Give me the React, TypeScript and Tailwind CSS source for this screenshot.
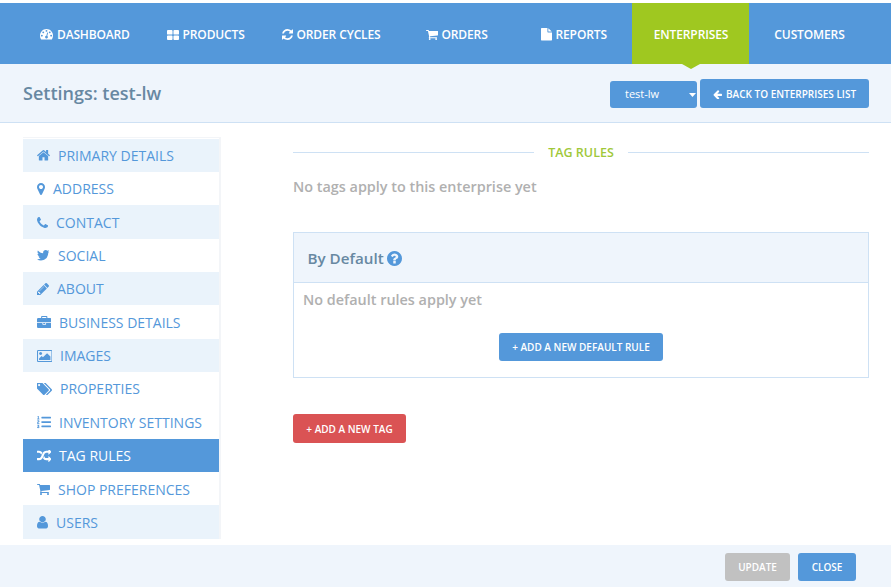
import React from "react";
import { FaListOl } from "react-icons/fa";

type IconProps = { box: string; w: number; h: number; d: string };

function Icon({ box, w, h, d }: IconProps) {
  return (
    <svg viewBox={box} width={w} height={h} fill="currentColor" preserveAspectRatio="none" className="shrink-0" aria-hidden="true">
      <path d={d} />
    </svg>
  );
}

const paths = {
  home: "M1472 992v480q0 26-19 45t-45 19h-384v-384h-256v384h-384q-26 0-45-19t-19-45v-480q0-1 .5-3t.5-3l575-474 575 474q1 2 1 6zm223-69l-62 74q-8 9-21 11h-3q-13 0-21-7l-692-577-692 577q-12 8-24 7-13-2-21-11l-62-74q-8-10-7-23.5t11-21.5l719-599q32-26 76-26t76 26l244 204v-195q0-14 9-23t23-9h192q14 0 23 9t9 23v408l219 182q10 8 11 21.5t-7 23.5z",
  marker: "M1152 640q0-106-75-181t-181-75-181 75-75 181 75 181 181 75 181-75 75-181zm256 0q0 109-33 179l-364 774q-16 33-47.5 52t-67.5 19-67.5-19-46.5-52l-365-774q-33-70-33-179 0-212 150-362t362-150 362 150 150 362z",
  phone: "M1600 1240q0 27-10 70.5t-21 68.5q-21 50-122 106-94 51-186 51-27 0-52.5-3.5t-57.5-12.5-47.5-14.5-55.5-20.5-49-18q-98-35-175-83-128-79-264.5-215.5t-215.5-264.5q-48-77-83-175-3-9-18-49t-20.5-55.5-14.5-47.5-12.5-57.5-3.5-52.5q0-92 51-186 56-101 106-122 25-11 68.5-21t70.5-10q14 0 21 3 18 6 53 76 11 19 30 54t35 63.5 31 53.5q3 4 17.5 25t21.5 35.5 7 28.5q0 20-28.5 50t-62 55-62 53-28.5 46q0 9 5 22.5t8.5 20.5 14 24 11.5 19q76 137 174 235t235 174q2 1 19 11.5t24 14 20.5 8.5 22.5 5q18 0 46-28.5t53-62 55-62 50-28.5q14 0 28.5 7t35.5 21.5 25 17.5q25 15 53.5 31t63.5 35 54 30q70 35 76 53 3 7 3 21z",
  twitter: "M1684 408q-67 98-162 167 1 14 1 42 0 130-38 259.5t-115.5 248.5-184.5 210.5-258 146-323 54.5q-271 0-496-145 35 4 78 4 225 0 401-138-105-2-188-64.5t-114-159.5q33 5 61 5 43 0 85-11-112-23-185.5-111.5t-73.5-205.5v-4q68 38 146 41-66-44-105-115t-39-154q0-88 44-163 121 149 294.5 238.5t371.5 99.5q-8-38-8-74 0-134 94.5-228.5t228.5-94.5q140 0 236 102 109-21 205-78-37 115-142 178 93-10 186-50z",
  pencil: "M491 1536l91-91-235-235-91 91v107h128v128h107zm523-928q0-22-22-22-10 0-17 7l-542 542q-7 7-7 17 0 22 22 22 10 0 17-7l542-542q7-7 7-17zm-54-192l416 416-832 832h-416v-416zm683 96q0 53-37 90l-166 166-416-416 166-165q36-38 90-38 53 0 91 38l235 234q37 39 37 91z",
  briefcase: "M640 256h512v-128h-512v128zm1152 640v480q0 66-47 113t-113 47h-1472q-66 0-113-47t-47-113v-480h672v160q0 26 19 45t45 19h320q26 0 45-19t19-45v-160h672zm-768 0v128h-256v-128h256zm768-480v384h-1792v-384q0-66 47-113t113-47h352v-160q0-40 28-68t68-28h576q40 0 68 28t28 68v160h352q66 0 113 47t47 113z",
  picture: "M704 576q0 80-56 136t-136 56-136-56-56-136 56-136 136-56 136 56 56 136zm1024 384v448h-1408v-192l320-320 160 160 512-512zm96-704h-1600q-13 0-22.5 9.5t-9.5 22.5v1216q0 13 9.5 22.5t22.5 9.5h1600q13 0 22.5-9.5t9.5-22.5v-1216q0-13-9.5-22.5t-22.5-9.5zm160 32v1216q0 66-47 113t-113 47h-1600q-66 0-113-47t-47-113v-1216q0-66 47-113t113-47h1600q66 0 113 47t47 113z",
  tags: "M384 448q0-53-37.5-90.5t-90.5-37.5-90.5 37.5-37.5 90.5 37.5 90.5 90.5 37.5 90.5-37.5 37.5-90.5zm1067 576q0 53-37 90l-491 492q-39 37-91 37-53 0-90-37l-715-716q-38-37-64.5-101t-26.5-117v-416q0-52 38-90t90-38h416q53 0 117 26.5t102 64.5l715 714q37 39 37 91zm384 0q0 53-37 90l-491 492q-39 37-91 37-36 0-59-14t-53-45l470-470q37-37 37-90 0-52-37-91l-715-714q-38-38-102-64.5t-117-26.5h224q53 0 117 26.5t102 64.5l715 714q37 39 37 91z",
  random: "M666 481q-60 92-137 273-22-45-37-72.5t-40.5-63.5-51-56.5-63-35-81.5-14.5h-224q-14 0-23-9t-9-23v-192q0-14 9-23t23-9h224q250 0 410 225zm1126 799q0 14-9 23l-320 320q-9 9-23 9-13 0-22.5-9.5t-9.5-22.5v-192q-32 0-85 .5t-81 1-73-1-71-5-64-10.5-63-18.5-58-28.5-59-40-55-53.5-56-69.5q59-93 136-273 22 45 37 72.5t40.5 63.5 51 56.5 63 35 81.5 14.5h256v-192q0-14 9-23t23-9q12 0 24 10l319 319q9 9 9 23zm0-896q0 14-9 23l-320 320q-9 9-23 9-13 0-22.5-9.5t-9.5-22.5v-192h-256q-48 0-87 15t-69 45-51 61.5-45 77.5q-32 62-78 171-29 66-49.5 111t-54 105-64 100-74 83-90 68.5-106.5 42-128 16.5h-224q-14 0-23-9t-9-23v-192q0-14 9-23t23-9h224q48 0 87-15t69-45 51-61.5 45-77.5q32-62 78-171 29-66 49.5-111t54-105 64-100 74-83 90-68.5 106.5-42 128-16.5h256v-192q0-14 9-23t23-9q12 0 24 10l319 319q9 9 9 23z",
  cart: "M704 1536q0 52-38 90t-90 38-90-38-38-90 38-90 90-38 90 38 38 90zm896 0q0 52-38 90t-90 38-90-38-38-90 38-90 90-38 90 38 38 90zm128-1088v512q0 24-16.5 42.5t-40.5 21.5l-1044 122q13 60 13 70 0 16-24 64h920q26 0 45 19t19 45-19 45-45 19h-1024q-26 0-45-19t-19-45q0-11 8-31.5t16-36 21.5-40 15.5-29.5l-177-823h-204q-26 0-45-19t-19-45 19-45 45-19h256q16 0 28.5 6.5t19.5 15.5 13 24.5 8 26 5.5 29.5 4.5 26h1201q26 0 45 19t19 45z",
  user: "M1536 1399q0 109-62.5 187t-150.5 78h-854q-88 0-150.5-78t-62.5-187q0-85 8.5-160.5t31.5-152 58.5-131 94-89 134.5-34.5q131 128 313 128t313-128q76 0 134.5 34.5t94 89 58.5 131 31.5 152 8.5 160.5zm-256-887q0 159-112.5 271.5t-271.5 112.5-271.5-112.5-112.5-271.5 112.5-271.5 271.5-112.5 271.5 112.5 112.5 271.5z",
  dashboard: "M384 1152q0-53-37.5-90.5t-90.5-37.5-90.5 37.5-37.5 90.5 37.5 90.5 90.5 37.5 90.5-37.5 37.5-90.5zm192-448q0-53-37.5-90.5t-90.5-37.5-90.5 37.5-37.5 90.5 37.5 90.5 90.5 37.5 90.5-37.5 37.5-90.5zm428 481l101-382q6-26-7.5-48.5t-38.5-29.5-48 6.5-30 39.5l-101 382q-60 5-107 43.5t-63 98.5q-20 77 20 146t117 89 146-20 89-117q16-60-6-117t-72-91zm660-33q0-53-37.5-90.5t-90.5-37.5-90.5 37.5-37.5 90.5 37.5 90.5 90.5 37.5 90.5-37.5 37.5-90.5zm-640-640q0-53-37.5-90.5t-90.5-37.5-90.5 37.5-37.5 90.5 37.5 90.5 90.5 37.5 90.5-37.5 37.5-90.5zm448 192q0-53-37.5-90.5t-90.5-37.5-90.5 37.5-37.5 90.5 37.5 90.5 90.5 37.5 90.5-37.5 37.5-90.5zm320 448q0 261-141 483-19 29-54 29h-1402q-35 0-54-29-141-221-141-483 0-182 71-348t191-286 286-191 348-71 348 71 286 191 191 286 71 348z",
  grid: "M192 896h512q128 0 128 128v384q0 128-128 128h-512q-128 0-128-128v-384q0-128 128-128zm0-768h512q128 0 128 128v384q0 128-128 128h-512q-128 0-128-128v-384q0-128 128-128zm896 768h512q128 0 128 128v384q0 128-128 128h-512q-128 0-128-128v-384q0-128 128-128zm0-768h512q128 0 128 128v384q0 128-128 128h-512q-128 0-128-128v-384q0-128 128-128z",
  refresh: "M1639 1056q0 5-1 7-64 268-268 434.5t-478 166.5q-146 0-282.5-55t-243.5-157l-129 129q-19 19-45 19t-45-19-19-45v-448q0-26 19-45t45-19h448q26 0 45 19t19 45-19 45l-137 137q71 66 161 102t187 36q134 0 250-65t186-179q11-17 53-117 8-23 30-23h192q13 0 22.5 9.5t9.5 22.5zm25-800v448q0 26-19 45t-45 19h-448q-26 0-45-19t-19-45 19-45l138-138q-148-137-349-137-134 0-250 65t-186 179q-11 17-53 117-8 23-30 23h-199q-13 0-22.5-9.5t-9.5-22.5v-7q65-268 270-434.5t480-166.5q146 0 284 55.5t245 156.5l130-129q19-19 45-19t45 19 19 45z",
  file: "M1152 512v-472q22 14 36 28l408 408q14 14 28 36h-472zm-128 32q0 40 28 68t68 28h544v1056q0 40-28 68t-68 28h-1344q-40 0-68-28t-28-68v-1600q0-40 28-68t68-28h800v544z",
  arrowLeft: "M1664 896v128q0 53-32.5 90.5t-84.5 37.5h-704l293 294q38 36 38 90t-38 90l-75 76q-37 37-90 37-52 0-91-37l-651-652q-37-37-37-90 0-52 37-91l651-650q38-38 91-38 52 0 90 38l75 74q38 38 38 91t-38 91l-293 293h704q52 0 84.5 37.5t32.5 90.5z",
  question: "M1024 1376v-192q0-14-9-23t-23-9h-192q-14 0-23 9t-9 23v192q0 14 9 23t23 9h192q14 0 23-9t9-23zm256-672q0-88-55.5-163t-138.5-116-170-41q-243 0-371 213-15 24 8 42l132 100q7 6 19 6 16 0 25-12 53-68 86-92 34-24 86-24 48 0 85.5 26t37.5 59q0 38-20 61t-68 45q-63 28-115.5 86.5t-52.5 125.5v36q0 14 9 23t23 9h192q14 0 23-9t9-23q0-19 21.5-49.5t54.5-49.5q32-18 49-28.5t46-35 44.5-48 28-60.5 12.5-81zm384 192q0 209-103 385.5t-279.5 279.5-385.5 103-385.5-103-279.5-279.5-103-385.5 103-385.5 279.5-279.5 385.5-103 385.5 103 279.5 279.5 103 385.5z",
};

const navItems = [
  { label: "DASHBOARD", icon: <Icon box="0 256 1792 1408" w={13} h={10.5} d={paths.dashboard} />, cell: "ml-[40px] w-[126.5px] tracking-[-0.16px]" },
  { label: "PRODUCTS", icon: <Icon box="64 128 1664 1408" w={12} h={10} d={paths.grid} />, cell: "w-[115px]" },
  { label: "ORDER CYCLES", icon: <Icon box="128 128 1536 1536" w={11} h={11} d={paths.refresh} />, cell: "w-[144px]" },
  { label: "ORDERS", icon: <Icon box="64 256 1664 1408" w={12} h={10} d={paths.cart} />, cell: "w-[115px]" },
  { label: "REPORTS", icon: <Icon box="128 0 1536 1792" w={11} h={12.5} d={paths.file} />, cell: "w-[91.5px]" },
];

const menu = [
  { label: "PRIMARY DETAILS", icon: <Icon box="90 250 1612 1286" w={13} h={10.5} d={paths.home} />, bg: "bg-[#eaf3fb]", gap: "gap-[8.5px]" },
  { label: "ADDRESS", icon: <Icon box="384 128 1024 1536" w={8} h={12} d={paths.marker} />, bg: "bg-white", gap: "gap-[8.5px]" },
  { label: "CONTACT", icon: <Icon box="192 128 1408 1408" w={11} h={11} d={paths.phone} />, bg: "bg-[#eaf3fb]", gap: "gap-[8.5px]" },
  { label: "SOCIAL", icon: <Icon box="108 256 1576 1280" w={12.5} h={10.5} d={paths.twitter} />, bg: "bg-white", gap: "gap-[9px]" },
  { label: "ABOUT", icon: <Icon box="128 149 1515 1515" w={12} h={12} d={paths.pencil} />, bg: "bg-[#eaf3fb]", gap: "gap-[8.5px]" },
  { label: "BUSINESS DETAILS", icon: <Icon box="0 0 1792 1536" w={14.5} h={12} d={paths.briefcase} />, bg: "bg-white", gap: "gap-[8px]" },
  { label: "IMAGES", icon: <Icon box="64 128 1920 1536" w={15.5} h={12} d={paths.picture} />, bg: "bg-[#eaf3fb]", gap: "gap-[8px]" },
  { label: "PROPERTIES", icon: <Icon box="0 192 1835 1451" w={15} h={12} d={paths.tags} />, bg: "bg-white", gap: "gap-[8.5px]" },
  { label: "INVENTORY SETTINGS", icon: <FaListOl size={14} className="shrink-0" />, bg: "bg-white", gap: "gap-[8.5px]" },
  { label: "TAG RULES", icon: <Icon box="0 160 1792 1472" w={14.5} h={12} d={paths.random} />, bg: "bg-[#5498da] text-white", gap: "gap-[8px]" },
  { label: "SHOP PREFERENCES", icon: <Icon box="64 256 1664 1408" w={13} h={11} d={paths.cart} />, bg: "bg-white", gap: "gap-[8.5px]" },
  { label: "USERS", icon: <Icon box="256 128 1280 1536" w={11} h={12.5} d={paths.user} />, bg: "bg-[#eaf3fb]", gap: "gap-[8.5px]" },
];

export default function App() {
  return (
    <div className="flex h-[587px] w-[891px] flex-col overflow-hidden bg-white pt-[3px] font-['Open_Sans',sans-serif] text-[#5498da]">
      <nav className="flex h-[61px] shrink-0 items-stretch bg-[#5498da] text-[12px] font-semibold tracking-[-0.12px] text-white">
        {navItems.map((n) => (
          <a key={n.label} className={`flex shrink-0 items-center gap-[4px] whitespace-nowrap pt-[2px] ${n.cell}`}>
            {n.icon}
            <span>{n.label}</span>
          </a>
        ))}
        <a className="relative flex w-[117px] shrink-0 items-center justify-center bg-[#9fc820] pl-px pt-[2px]">
          ENTERPRISES
          <svg className="absolute left-[50px] top-[61px]" width="18" height="5" viewBox="0 0 18 5" aria-hidden="true">
            <path d="M0 0h18L9 5z" fill="#9fc820" />
          </svg>
        </a>
        <a className="flex w-[120px] shrink-0 items-center justify-center pl-px pt-[2px]">CUSTOMERS</a>
      </nav>

      <header className="flex h-[59px] shrink-0 items-center border-b border-[#cee1f4] bg-[#eff5fc] pl-[23px] pr-[22px]">
        <h1 className="flex-1 text-[18px] font-semibold text-[#6788a2]">Settings: test-lw</h1>
        <div className="flex items-end gap-[3px] pt-px">
          <div className="flex h-[27px] w-[87px] items-center justify-between rounded-[3px] bg-[#5498da] pl-[15px] pr-[1px] text-[11px] text-white">
            <span>test-lw</span>
            <svg width="7" height="4" viewBox="0 0 7 4" aria-hidden="true"><path d="M0 0h7L3.500 4z" fill="white" /></svg>
          </div>
          <button className="flex h-[29px] w-[169px] items-center gap-[4px] rounded-[3px] bg-[#5498da] pl-[13px] pt-[2px] text-[10px] font-semibold whitespace-nowrap text-white">
            <Icon box="91 153 1573 1486" w={9} h={9} d={paths.arrowLeft} />
            <span>BACK TO ENTERPRISES LIST</span>
          </button>
        </div>
      </header>

      <div className="flex h-[422px] shrink-0 pl-[23px] pr-[22px]">
        <aside className="mt-[14px] h-[402px] w-[198px] shrink-0 border-r-2 border-t border-[#f3f5f8] pt-[0.5px]">
          {menu.map((m) => (
            <a key={m.label} className={`flex h-[33.370px] items-center pl-[13.5px] pt-[0.5px] text-[14px] whitespace-nowrap ${m.bg} ${m.gap}`}>
              {m.icon}
              <span>{m.label}</span>
            </a>
          ))}
        </aside>

        <main className="ml-[72px] flex flex-1 flex-col pt-[19px]">
          <div className="flex h-[20px] items-center gap-[14px]">
            <span className="h-px flex-1 bg-[#cee1f4]" />
            <h2 className="pt-[2px] text-[12.500px] font-semibold text-[#9fc83a]">TAG RULES</h2>
            <span className="h-px flex-1 bg-[#cee1f4]" />
          </div>
          <p className="mt-[15px] h-[20px] text-[14.400px] font-semibold leading-[20px] text-[#b0b0b0]">No tags apply to this enterprise yet</p>
          <section className="mt-[35px] h-[146px] shrink-0 border border-[#cee1f4]">
            <div className="flex h-[50px] items-center gap-[3px] border-b border-[#cee1f4] bg-[#eff5fc] pl-[13.500px] pt-px">
              <h3 className="pt-px text-[15.200px] font-semibold text-[#6788a2]">By Default</h3>
              <Icon box="128 128 1536 1536" w={15} h={15} d={paths.question} />
            </div>
            <p className="ml-[9px] mt-[7px] h-[20px] text-[14.400px] font-semibold leading-[20px] text-[#b0b0b0]">No default rules apply yet</p>
            <button className="mx-auto mt-[23px] flex h-[28px] w-[164px] items-center justify-center rounded-[3px] bg-[#5498da] pt-px text-[10px] font-semibold whitespace-nowrap text-white">+ ADD A NEW DEFAULT RULE</button>
          </section>
          <button className="mt-[36px] flex h-[29px] w-[113px] items-center justify-center rounded-[3px] bg-[#da5354] pt-px text-[10px] font-semibold whitespace-nowrap text-white">+ ADD A NEW TAG</button>
        </main>
      </div>

      <footer className="flex h-[42px] shrink-0 items-start justify-end gap-[8px] bg-[#eff5fc] pr-[35px] pt-[8px] text-[10px] font-semibold text-white">
        <button className="h-[28px] w-[65px] rounded-[3px] bg-[#c1c1c1]">UPDATE</button>
        <button className="h-[28px] w-[58px] rounded-[3px] bg-[#5498da]">CLOSE</button>
      </footer>
    </div>
  );
}
